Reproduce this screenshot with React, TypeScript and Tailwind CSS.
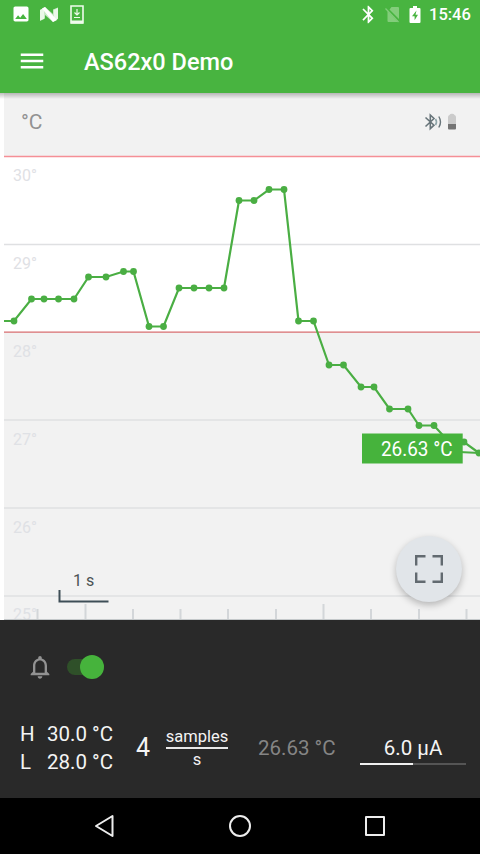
import { MdBluetooth, MdImage, MdMenu, MdNotificationsNone } from 'react-icons/md';

type Point = [number, number];

// chart coordinates, origin at the top left of the chart area
const samples: Point[] = [
  [4, 228], [14, 228], [31.5, 206], [44, 206], [58.5, 206], [74, 206],
  [88.5, 184], [106, 184], [123.5, 178.5], [133.5, 178.5], [149, 233.5],
  [163.5, 233.5], [179, 195], [194, 195], [209, 195], [224, 195],
  [239, 107.5], [254, 107.5], [269, 96.5], [284, 96.5], [298.5, 228],
  [313.5, 228], [329, 272], [343.5, 272], [361, 294], [374, 294],
  [389.5, 316], [408, 316], [419, 332.5], [434, 332.5], [449, 349],
  [464, 349], [479, 360],
];

const labels = [
  { text: '30°', y: 88 },
  { text: '29°', y: 176 },
  { text: '28°', y: 264 },
  { text: '27°', y: 352 },
  { text: '26°', y: 440 },
  { text: '25°', y: 527 },
];

const gridLines = [151.5, 327, 415, 503];
const ticks = [37.5, 85.5, 133, 180.5, 228, 276, 323.5, 371, 419, 466.5];
const tallTicks = [85.5, 323.5];

function StatusBar() {
  return (
    <div className="flex h-7 items-center justify-between pl-[11px] pr-[10px] text-white">
      <div className="flex items-center">
        <MdImage className="size-5" />
        <svg className="ml-[9px] h-[15px] w-[18px]" viewBox="0 0 18 15">
          <path d="M0 3l4-2v11l-4 2z M18 1v11l-4 2V3z" fill="#b9e6b4" />
          <path d="M0 3l5-3 8 7V2.5l5-2v11l-5 3.5-8-7v3.5l-5 2z" fill="#fff" fillOpacity=".7" />
          <path d="M2 1.5L5 0l12 13-4 2z" fill="#fff" />
        </svg>
        <svg className="ml-[12px] h-[19px] w-[14px]" viewBox="0 0 14 19" fill="none" stroke="#eefbec">
          <path d="M1 1h12v17H1z" strokeWidth="1.6" />
          <path d="M1 17h12" strokeWidth="3" />
          <path d="M7 4v6M4.5 7.5L7 10l2.500-2.500M4 12.5h6" strokeWidth="1.2" />
        </svg>
      </div>
      <div className="flex items-center">
        <MdBluetooth className="size-[21px]" />
        <svg className="ml-[6px] h-[17px] w-[15px]" viewBox="0 0 15 17">
          <path d="M6.5 1H13q1 0 1 1v11L4.5 3.5z M2.5 5L13 16H3.5q-1 0-1-1z" fill="#83cd7b" />
          <path d="M.5 2.5L13.5 16" stroke="#83cd7b" strokeWidth="1.2" />
        </svg>
        <svg className="ml-[9px] h-[17px] w-[12px]" viewBox="0 0 12 17">
          <path d="M4 0h4v2h2.500q1 0 1 1v13q0 1-1 1h-9q-1 0-1-1V3q0-1 1-1H4z" fill="#fff" />
          <path d="M7.5 4.5L3 10.300h2.600v4L9 8.700H6.500z" fill="#48b440" />
        </svg>
        <span className="ml-[8px] w-[41px] pt-px text-[16.5px] font-medium leading-7">15:46</span>
      </div>
    </div>
  );
}

function Toolbar() {
  return (
    <div className="flex h-[65px] items-center pl-[17px] text-white">
      <MdMenu className="size-[30px]" />
      <h1 className="ml-[37px] pt-[5px] text-[23.5px] font-medium">AS62x0 Demo</h1>
    </div>
  );
}

function Chart() {
  const line = samples.map(([x, y]) => `${x},${y}`).join(' ');

  return (
    <section className="relative h-[527px] overflow-hidden bg-white">
      <svg className="block h-[527px] w-[480px]" viewBox="0 0 480 527" fontFamily="Roboto, sans-serif">
        {/* out of range zones */}
        <rect x="4" width="476" height="63" fill="#f2f2f2" />
        <rect x="4" y="239" width="476" height="288" fill="#f2f2f2" />
        {gridLines.map((y) => (
          <path key={y} d={`M4 ${y}H480`} stroke="#dfe0e2" strokeWidth="1.3" />
        ))}
        <path d="M4 63.5H480" stroke="#f58f96" strokeWidth="1.4" />
        <path d="M4 239.2H480" stroke="#d86e70" strokeWidth="1.2" />

        {labels.map((label) => (
          <text key={label.text} x="13" y={label.y} fontSize="16" textLength="24" fill="#dfe1e5">
            {label.text}
          </text>
        ))}
        {ticks.map((x) => (
          <path key={x} d={`M${x} ${tallTicks.includes(x) ? 511 : 516}V527`} stroke="#d3d6d9" strokeWidth="2" />
        ))}
        <path d="M4 526.5H480" stroke="#c4c8ca" />

        {/* time scale */}
        <text x="73" y="492.5" fontSize="16" fill="#4b5254">1 s</text>
        <path d="M59.5 497V508.5H108.5" fill="none" stroke="#3e4e57" strokeWidth="2" />

        {/* temperature */}
        <polyline points={line} fill="none" stroke="#4aae43" strokeWidth="2.2" />
        <path d="M440 358L479 360" stroke="#4aae43" strokeWidth="2.2" />
        {samples.slice(1).map(([x, y]) => (
          <circle key={x} cx={x} cy={y} r="3.4" fill="#4aae43" />
        ))}
        <rect x="362" y="340.5" width="100.7" height="30" fill="#46b33c" />
        <text x="381" y="363" fontSize="19.5" textLength="71.5" lengthAdjust="spacingAndGlyphs" fill="#fff">
          26.63 °C
        </text>

        <text x="21" y="36.3" fontSize="21" fill="#929292">°C</text>

        {/* connection and battery */}
        <g fill="none" stroke="#68757a" strokeWidth="1.6">
          <path d="M425.5 24.5L434 32.2l-3.700 3.500V22l3.700 3.500-8.500 8" />
          <path d="M435.5 26q2 3 0 6" stroke="#8fa6aa" />
          <path d="M438.8 23.5q3.400 5.500 0 11" strokeWidth="1.4" />
        </g>
        <path d="M448 32v-8q0-1.500 1.500-2 .5-1.200 2.500-1.200t2.500 1.200q1.500.5 1.500 2v8z" fill="#cbcbcb" />
        <path d="M448 31h8v4.500q0 1-1 1h-6q-1 0-1-1z" fill="#747474" />
      </svg>

      <button className="absolute bottom-[18px] left-[396px] flex size-[66px] items-center justify-center rounded-full bg-[#e1e5e9] shadow-[0_3px_7px_rgba(0,0,0,0.25)]">
        <svg className="size-7" viewBox="0 0 28 28" fill="none" stroke="#626a70" strokeWidth="2.4">
          <path d="M1.2 10.5V1.200h9.300M17.5 1.200h9.300v9.300M26.8 17.500v9.300h-9.300M10.5 26.800H1.200v-9.300" />
        </svg>
      </button>
      <div className="absolute inset-x-0 top-0 h-[6px] bg-linear-to-b from-black/25 to-transparent" />
    </section>
  );
}

function Panel() {
  return (
    <section className="h-[178px] bg-[#292929] text-[#f4f4f4]">
      <div className="flex h-[94px] items-center pl-[26px]">
        <MdNotificationsNone className="size-7 text-[#929292]" />
        <div className="ml-[13px] flex h-4 w-[37px] items-center justify-end rounded-full bg-[#2f5029]">
          <div className="size-6 shrink-0 rounded-full bg-[#46b33c]" />
        </div>
      </div>

      <div className="flex h-[68px] items-center">
        <dl className="ml-5 grid w-[94px] grid-cols-[27px_1fr] whitespace-nowrap text-[20.5px] leading-7">
          <dt>H</dt>
          <dd>30.0 °C</dd>
          <dt>L</dt>
          <dd>28.0 °C</dd>
        </dl>
        <span className="ml-[22px] w-[14px] text-[25px]">4</span>
        <div className="ml-[16px] flex w-[62px] flex-col items-center text-[16.5px] leading-[22px]">
          <span className="border-b-2 border-[#e8e8e8] leading-[21px]">samples</span>
          <span>s</span>
        </div>
        <span className="ml-[30px] w-[79px] whitespace-nowrap text-[20.5px] text-[#858585]">26.63 °C</span>
        <div className="ml-[23px] w-[106px] pt-[3px] text-center text-[20.5px] leading-7">
          6.0 µA
          <div className="mt-[1px] h-[2px] bg-[#555]">
            <div className="h-full w-1/2 bg-[#f0f0f0]" />
          </div>
        </div>
      </div>
    </section>
  );
}

function NavigationBar() {
  return (
    <nav className="flex h-14 items-center justify-between bg-black px-[93px]">
      {['M19.5 2v20L3 12z', 'M12 2a10 10 0 1 1 0 20a10 10 0 1 1 0-20z', 'M3 3h18v18H3z'].map((d) => (
        <svg key={d} className="size-6" viewBox="0 0 24 24" fill="none" stroke="#ededed" strokeWidth="2" strokeLinejoin="round">
          <path d={d} />
        </svg>
      ))}
    </nav>
  );
}

export default function App() {
  return (
    <main className="h-[854px] w-[480px] overflow-hidden font-[Roboto,sans-serif]">
      <header className="h-[93px] bg-[#48b440]">
        <StatusBar />
        <Toolbar />
      </header>
      <Chart />
      <Panel />
      <NavigationBar />
    </main>
  );
}
